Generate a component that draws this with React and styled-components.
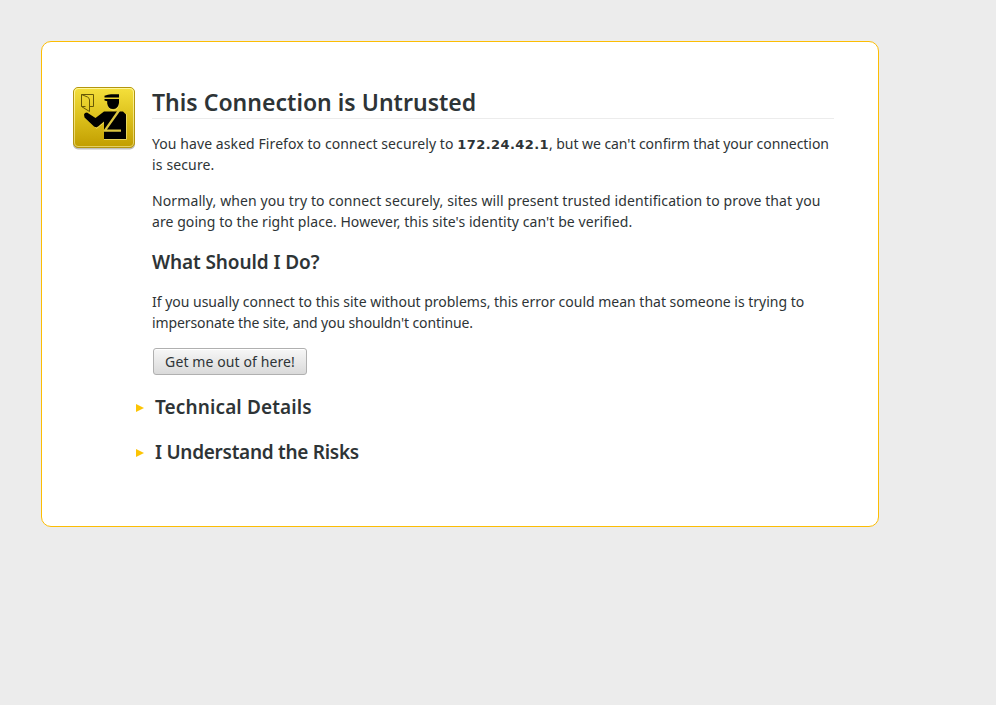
import React from 'react';
import styled, { createGlobalStyle } from 'styled-components';

const GlobalStyle = createGlobalStyle`
  * { box-sizing: border-box; }
  body {
    margin: 0;
    background: #ececec;
    color: #2e3436;
    font-family: "Noto Sans", "Open Sans", sans-serif;
    font-size: 14px;
  }
`;

const Page = styled.main`
  display: flex;
  align-items: flex-start;
  min-height: 705px;
  padding: 41px;
`;

const Card = styled.section`
  display: flex;
  width: 838px;
  height: 486px;
  padding: 44px 44px 0 30px;
  border: 1px solid #fcbd04;
  border-radius: 10px;
  background: #fff;
`;

const Badge = styled.svg`
  display: block;
  flex: none;
  width: 64px;
  height: 64px;
`;

const Content = styled.div`
  width: 682px;
  margin-left: 16px;
`;

const Title = styled.h1`
  height: 33px;
  margin: 0 0 14px;
  border-bottom: 1px solid #ececec;
  font-size: 23px;
  font-weight: 600;
  line-height: 33px;
  letter-spacing: ${(p) => p.$track}px;
  white-space: nowrap;
`;

const Heading = styled.h2`
  margin: 0;
  font-size: 19px;
  font-weight: 600;
  line-height: 25px;
  letter-spacing: ${(p) => p.$track}px;
  white-space: nowrap;
`;

const Paragraph = styled.p`
  margin: 0 0 ${(p) => p.$gap}px;
  line-height: 21px;
`;

const Line = styled.span`
  display: block;
  height: 21px;
  white-space: nowrap;
`;

const Run = styled.span`
  letter-spacing: ${(p) => p.$track}px;
`;

const Address = styled.strong`
  font-family: "DejaVu Sans", sans-serif;
  font-size: 13px;
  font-weight: 700;
  letter-spacing: 0.42px;
`;

const ExitButton = styled.button`
  display: flex;
  align-items: center;
  justify-content: center;
  width: 154px;
  height: 27px;
  margin: 0 0 20px 1px;
  padding: 0;
  border: 1px solid #b0b0b0;
  border-radius: 3px;
  background: linear-gradient(#f7f7f7, #dadada);
  box-shadow: inset 0 1px #fff;
  color: #2e3436;
  font: inherit;
  line-height: 20px;
  letter-spacing: 0.1px;
  white-space: nowrap;
`;

const Expander = styled.div`
  display: flex;
  align-items: center;
  height: 25px;
  margin: 0 0 20px -16px;
`;

const Arrow = styled.svg`
  display: block;
  width: 8px;
  height: 8px;
  margin-right: 11px;
`;

const OfficerBadge = () => (
  <Badge viewBox="0 0 64 64" aria-hidden="true">
    <defs>
      <linearGradient id="face" x1="0" y1="0" x2="0" y2="1">
        <stop offset="0" stopColor="#f5e03c" />
        <stop offset="0.5" stopColor="#dcc01b" />
        <stop offset="1" stopColor="#c19d00" />
      </linearGradient>
      <linearGradient id="rim" x1="0" y1="0" x2="0" y2="1">
        <stop offset="0" stopColor="#fff79a" />
        <stop offset="1" stopColor="#e4cf62" />
      </linearGradient>
    </defs>
    <rect x="1" y="2" width="62" height="61.5" rx="5" fill="#000" opacity="0.25" />
    <rect x="1.5" y="1.5" width="61" height="60" rx="4.5" fill="url(#face)" stroke="#b3950f" />
    <rect x="2.5" y="2.5" width="59" height="58" rx="3.5" fill="none" stroke="url(#rim)" />
    <g fill="none" stroke="#665807">
      <path d="M17.500 20.500h4v-12h-12v12h4" />
      <path d="M9.500 8.500l6 2.500q2 1 2 3v11.500l-8-5" />
    </g>
    <g fill="none" stroke="#f3e47c" opacity="0.7">
      <path d="M12.500 31l12 11.500 7.500-6M32 53.500h22.500V28" />
      <path d="M36 20q2 4.500 5.500 4.500T47 19" />
    </g>
    <path d="M32.500 9.800Q36 8.300 39 8.300h8v3.200H32.500z" />
    <path d="M32.500 13H47v4q-1 6-6 6-4.800 0-5.800-5.500V15.300L32.500 14.500z" />
    <path d="M12 28.500q.5-2 3-2l8.500 5.500 8.500-6.500h19l3 3V53H32V35.500l-6 5q-2 1.500-4 0l-9.500-9z" />
    <path d="M47 24.500L32.800 44.700H49" fill="none" stroke="#dcc540" strokeWidth="2.300" strokeLinejoin="round" />
  </Badge>
);

const Section = ({ track, children }) => (
  <Expander>
    <Arrow viewBox="0 0 8 8" aria-hidden="true">
      <path d="M0 0l8 4-8 4z" fill="#fcc404" />
    </Arrow>
    <Heading $track={track}>{children}</Heading>
  </Expander>
);

const WhatToDo = styled(Heading)`
  margin-bottom: 16px;
`;

export default function App() {
  return (
    <>
      <GlobalStyle />
      <Page>
        <Card>
          <OfficerBadge />
          <Content>
            <Title $track={0.02}>This Connection is Untrusted</Title>
            <Paragraph $gap={15}>
              <Line>
                <Run $track={0.08}>You have asked Firefox to connect securely to </Run>
                <Address>172.24.42.1</Address>
                <Run $track={-0.06}>, but we can't confirm that your connection</Run>
              </Line>
              <Line><Run $track={0.14}>is secure.</Run></Line>
            </Paragraph>
            <Paragraph $gap={18}>
              <Line><Run $track={0.11}>Normally, when you try to connect securely, sites will present trusted identification to prove that you</Run></Line>
              <Line><Run $track={0.07}>are going to the right place. However, this site's identity can't be verified.</Run></Line>
            </Paragraph>
            <WhatToDo $track={-0.1}>What Should I Do?</WhatToDo>
            <Paragraph $gap={15}>
              <Line><Run $track={-0.01}>If you usually connect to this site without problems, this error could mean that someone is trying to</Run></Line>
              <Line><Run $track={-0.11}>impersonate the site, and you shouldn't continue.</Run></Line>
            </Paragraph>
            <ExitButton type="button">Get me out of here!</ExitButton>
            <Section track={0.12}>Technical Details</Section>
            <Section track={-0.28}>I Understand the Risks</Section>
          </Content>
        </Card>
      </Page>
    </>
  );
}
